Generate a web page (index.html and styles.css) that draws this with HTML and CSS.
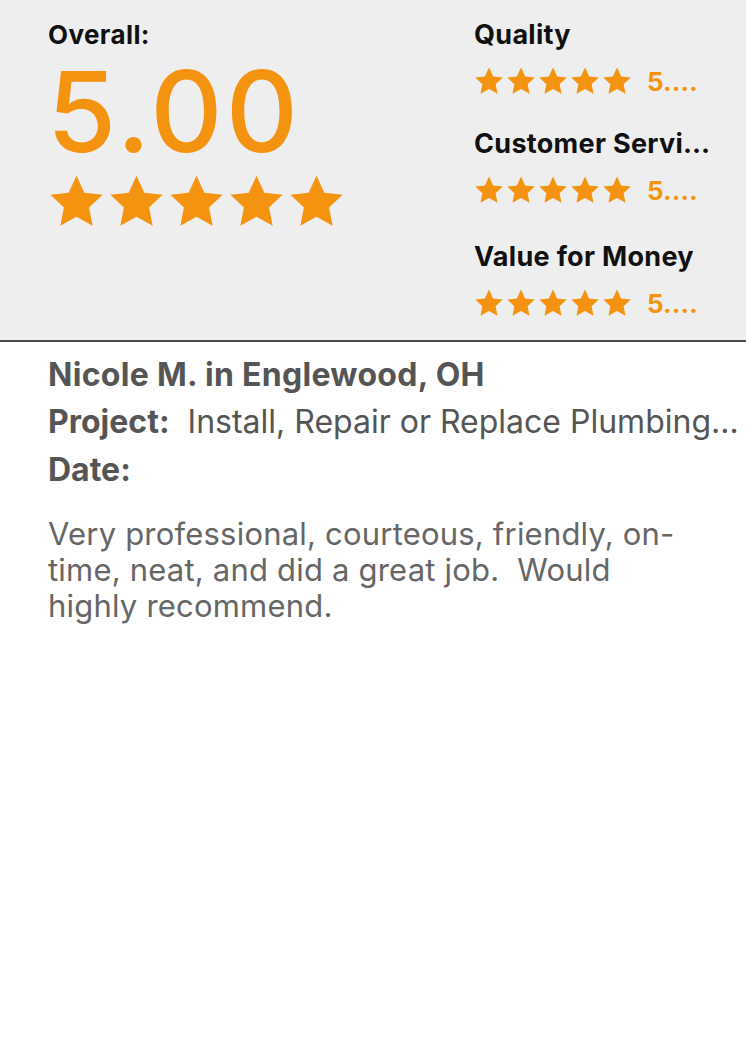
FILE: index.html
```html
<!DOCTYPE html>
<html>
	<head>
		<meta charset="utf-8" />
		<title>Review</title>
		<link rel="stylesheet" href="styles.css">
	</head>
	<body>
		<svg class="defs" width="0" height="0">
			<symbol id="star" viewBox="0 0 24 24">
				<path d="M12 1.2l3.3 7.1 7.7.9-5.7 5.3 1.5 7.7L12 18.4l-6.8 3.8 1.5-7.7L1 9.2l7.7-.9z" />
			</symbol>
		</svg>
		<div class="summary">
			<div class="overall">
				<div class="overall_title">Overall:</div>
				<div class="overall_num">5.00</div>
				<div class="stars big">
					<svg><use href="#star"/></svg><svg><use href="#star"/></svg><svg><use href="#star"/></svg><svg><use href="#star"/></svg><svg><use href="#star"/></svg>
				</div>
			</div>
			<ul class="cats">
				<li>
					<div class="cat_name">Quality</div>
					<div class="cat_row">
						<div class="stars small">
							<svg><use href="#star"/></svg><svg><use href="#star"/></svg><svg><use href="#star"/></svg><svg><use href="#star"/></svg><svg><use href="#star"/></svg>
						</div>
						<span class="cat_num">5.…</span>
					</div>
				</li>
				<li>
					<div class="cat_name">Customer Service</div>
					<div class="cat_row">
						<div class="stars small">
							<svg><use href="#star"/></svg><svg><use href="#star"/></svg><svg><use href="#star"/></svg><svg><use href="#star"/></svg><svg><use href="#star"/></svg>
						</div>
						<span class="cat_num">5.…</span>
					</div>
				</li>
				<li>
					<div class="cat_name">Value for Money</div>
					<div class="cat_row">
						<div class="stars small">
							<svg><use href="#star"/></svg><svg><use href="#star"/></svg><svg><use href="#star"/></svg><svg><use href="#star"/></svg><svg><use href="#star"/></svg>
						</div>
						<span class="cat_num">5.…</span>
					</div>
				</li>
			</ul>
		</div>
		<div class="review">
			<div class="who">Nicole M. in Englewood, OH</div>
			<div class="line"><b>Project:</b>&nbsp; Install, Repair or Replace Plumbing Fixtures</div>
			<div class="line"><b>Date:</b></div>
			<p class="text">Very professional, courteous, friendly, on-time, neat, and did a great job.&nbsp; Would highly recommend.</p>
		</div>
	</body>
</html>
```
FILE: styles.css
```css
*{margin: 0;padding: 0;list-style: none;box-sizing: border-box;}
body{font-family: Inter, Roboto, "Liberation Sans", sans-serif;background: #fff;width: 746px;}
.defs{position: absolute;}
.summary{display: flex;height: 342px;padding: 17px 0 0 48px;background: #eeeeee;border-bottom: 2px solid #4a4a4a;}
.overall{width: 426px;}
.overall_title{font-size: 26px;font-weight: 700;color: #111;line-height: 36px;letter-spacing: 0.4px;}
.overall_num{font-size: 112px;font-weight: 500;color: #f4930f;line-height: 104px;margin-top: 6px;margin-left: -1px;letter-spacing: 3px;}
.stars{display: flex;fill: #f4930f;}
.stars.big{gap: 3px;margin-top: 10px;}
.stars.big svg{width: 57px;height: 57px;}
.cats{width: 272px;}
.cats li{margin-bottom: 17px;}
.cats li:nth-child(2){margin-bottom: 21px;}
.cat_name{font-size: 27px;font-weight: 700;color: #111;line-height: 36px;white-space: nowrap;overflow: hidden;text-overflow: ellipsis;width: 238px;letter-spacing: 0.3px;}
.cat_row{display: flex;align-items: center;height: 56px;}
.stars.small{gap: 2px;}
.stars.small svg{width: 30px;height: 30px;}
.cat_num{font-size: 26px;font-weight: 700;color: #f4930f;margin-left: 15px;white-space: nowrap;}
.review{padding: 10px 4px 0 48px;color: #555;}
.who{font-size: 32px;font-weight: 700;line-height: 46px;letter-spacing: 0.3px;}
.line{font-size: 32px;line-height: 48px;white-space: nowrap;overflow: hidden;text-overflow: ellipsis;}
.line b{font-weight: 700;}
.text{font-size: 31px;line-height: 36px;margin-top: 22px;width: 650px;color: #666;letter-spacing: 0.2px;}
```
